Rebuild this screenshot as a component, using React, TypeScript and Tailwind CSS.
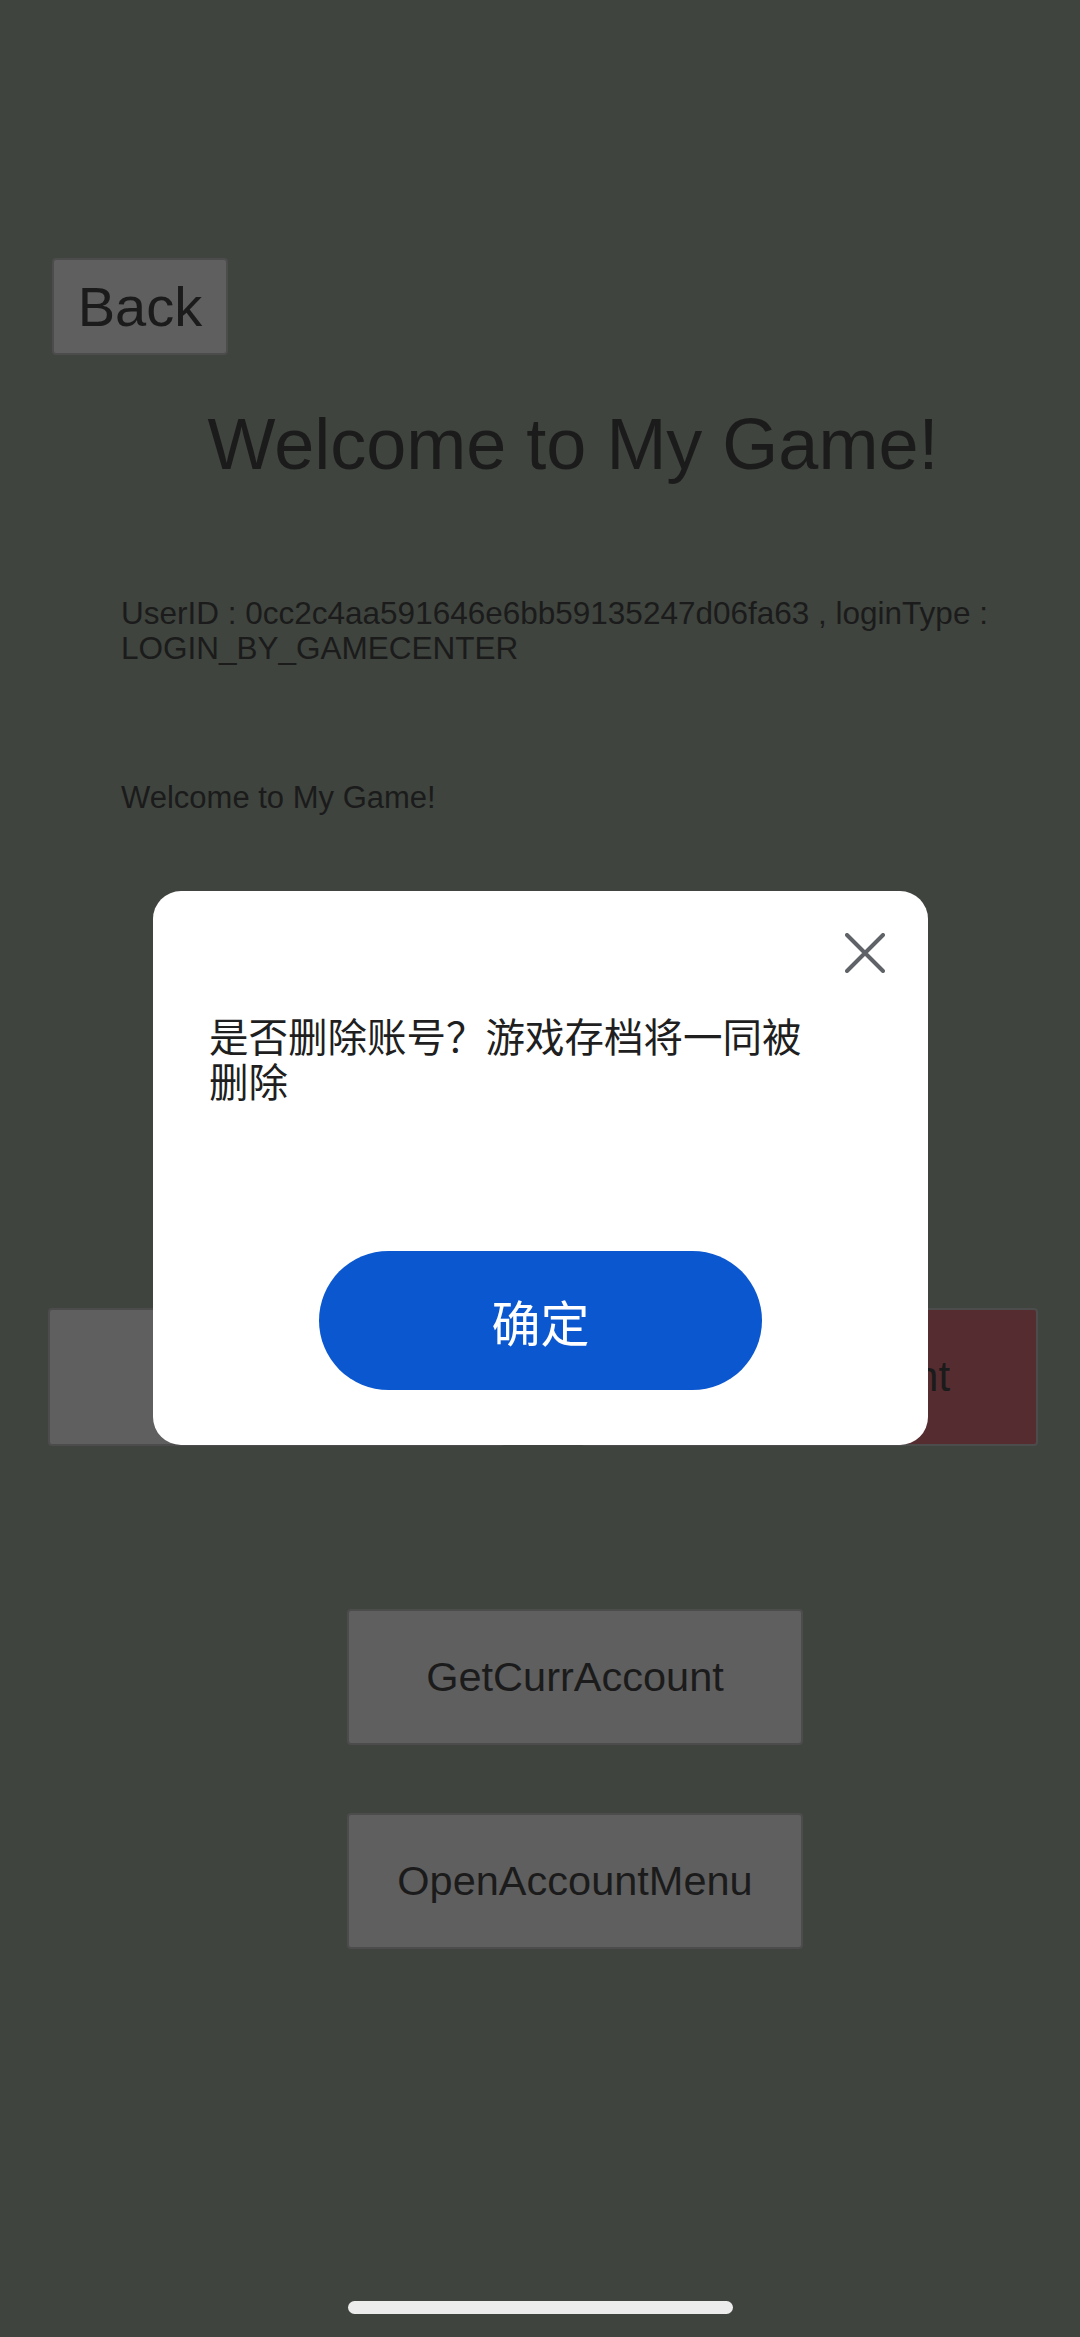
import React from "react";

const sans = { fontFamily: '"Liberation Sans", Arial, sans-serif' };
const cjk = { fontFamily: '"Noto Sans CJK SC", "Noto Sans", sans-serif' };

function GameButton({ label, className }: { label: string; className: string }) {
  return (
    <div
      className={`flex items-center justify-center rounded-[4px] border-2 border-[#4c4c4c] leading-none text-[#1b1b1b] ${className}`}
    >
      {label}
    </div>
  );
}

function ConfirmDialog() {
  return (
    <div className="absolute left-[153px] top-[891px] flex h-[554px] w-[775px] flex-col rounded-[28px] bg-white">
      <div className="flex justify-end pr-[43px] pt-[42px]">
        <svg width="40" height="40" viewBox="0 0 40 40" fill="none">
          <path d="M2 2 L38 38 M38 2 L2 38" stroke="#5f6368" strokeWidth="4" strokeLinecap="round" />
        </svg>
      </div>
      <p className="mt-[39px] w-[668px] pl-[56px] text-[39.5px] leading-[45px] text-[#1f1f1f]" style={cjk}>
        是否删除账号？游戏存档将一同被删除
      </p>
      <div className="mb-[55px] mt-auto flex justify-center">
        <div
          className="flex h-[139px] w-[443px] items-center justify-center rounded-full bg-[#0b57d0] text-[49px] text-white"
          style={cjk}
        >
          确定
        </div>
      </div>
    </div>
  );
}

export default function App() {
  return (
    <div className="relative h-[2337px] w-[1080px] overflow-hidden bg-[#3f443e]" style={sans}>
      <div className="flex flex-col pt-[258px]">
        <div className="ml-[52px] flex h-[97px] w-[176px] items-center justify-center rounded-[4px] border-2 border-[#4c4c4c] bg-[#5f5f5f] text-[56px] leading-none text-[#1b1b1b]">
          Back
        </div>

        <h1 className="mt-[53px] pl-[66px] text-center text-[72px] leading-[72px] text-[#1b1b1b]">
          Welcome to My Game!
        </h1>

        <p className="ml-[121px] mt-[116px] w-[890px] text-[31.5px] leading-[35px] text-[#1b1b1b]">
          UserID : 0cc2c4aa591646e6bb59135247d06fa63 , loginType : LOGIN_BY_GAMECENTER
        </p>

        <p className="ml-[121px] mt-[114px] text-[31px] leading-[35px] text-[#1b1b1b]">Welcome to My Game!</p>

        <div className="ml-[48px] mt-[493px] flex gap-[76px]">
          <GameButton label="Logout" className="h-[138px] w-[457px] bg-[#5f5f5f] text-[42px]" />
          <GameButton
            label="DeleteAccount"
            className="h-[138px] w-[457px] bg-[#552d30] border-[#4a2628] pl-[8px] text-[42px]"
          />
        </div>

        <GameButton
          label="GetCurrAccount"
          className="ml-[347px] mt-[163px] h-[136px] w-[456px] bg-[#5f5f5f] text-[41.5px]"
        />
        <GameButton
          label="OpenAccountMenu"
          className="ml-[347px] mt-[68px] h-[136px] w-[456px] bg-[#5f5f5f] text-[41.5px]"
        />
      </div>

      <ConfirmDialog />

      <div className="absolute left-[348px] top-[2301px] h-[13px] w-[385px] rounded-full bg-[#ececec]" />
    </div>
  );
}
